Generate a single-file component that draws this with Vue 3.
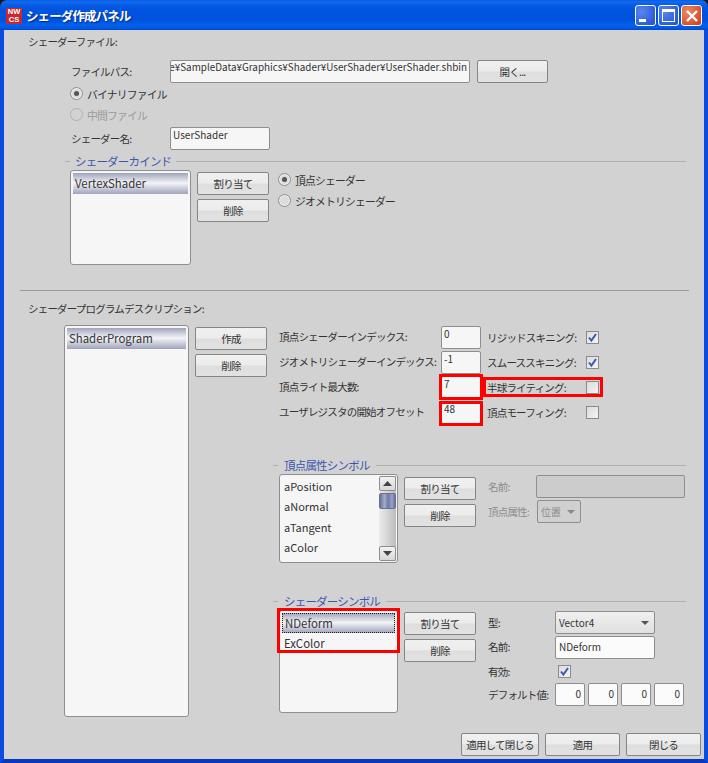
<script setup>
const fieldRows = [
  { label: '頂点シェーダーインデックス:', value: '0', flag: 'リジッドスキニング:', checked: true },
  { label: 'ジオメトリシェーダーインデックス:', value: '-1', flag: 'スムーススキニング:', checked: true },
  { label: '頂点ライト最大数:', value: '7', flag: '半球ライティング:', checked: false, mark: 'mark-a', markFlag: true },
  { label: 'ユーザレジスタの開始オフセット', value: '48', flag: '頂点モーフィング:', checked: false, mark: 'mark-b' }
]
const attributes = ['aPosition', 'aNormal', 'aTangent', 'aColor']
const defaults = ['0', '0', '0', '0']
</script>

<template>
  <div class="window">
    <header class="titlebar">
      <div class="app-icon"><span>NW</span><span>CS</span></div>
      <div class="caption">シェーダ作成パネル</div>
      <div class="caption-btn minimize"><i></i></div>
      <div class="caption-btn maximize"><i></i></div>
      <div class="caption-btn close">
        <svg width="14" height="14" viewBox="0 0 14 14"><path d="M2 2 L12 12 M12 2 L2 12" stroke="#fff" stroke-width="2.4" fill="none" /></svg>
      </div>
    </header>

    <main class="client">
      <div class="title first">シェーダーファイル:</div>

      <section class="file-form">
        <div class="row">
          <label class="lbl w99">ファイルパス:</label>
          <div class="input path"><span>e¥SampleData¥Graphics¥Shader¥UserShader¥UserShader.shbin</span></div>
          <button class="btn open">開く...</button>
        </div>
        <div class="radio-row outset"><span class="radio on"></span><span>バイナリファイル</span></div>
        <div class="radio-row outset disabled"><span class="radio"></span><span>中間ファイル</span></div>
        <div class="row">
          <label class="lbl w99">シェーダー名:</label>
          <div class="input name"><span>UserShader</span></div>
        </div>
      </section>

      <section class="group kind">
        <div class="group-head"><span class="dash"></span><span class="group-title">シェーダーカインド</span><span class="rule"></span></div>
        <div class="group-body">
          <div class="list kind-list"><div class="item selected">VertexShader</div></div>
          <div class="btn-col">
            <button class="btn">割り当て</button>
            <button class="btn">削除</button>
          </div>
          <div class="radio-col">
            <div class="radio-row"><span class="radio on"></span><span>頂点シェーダー</span></div>
            <div class="radio-row"><span class="radio"></span><span>ジオメトリシェーダー</span></div>
          </div>
        </div>
      </section>

      <hr class="separator" />
      <div class="title">シェーダープログラムデスクリプション:</div>

      <section class="program">
        <div class="list program-list"><div class="item selected">ShaderProgram</div></div>
        <div class="btn-col">
          <button class="btn">作成</button>
          <button class="btn">削除</button>
        </div>

        <div class="detail">
          <div class="fields">
            <template v-for="row in fieldRows" :key="row.label">
              <div class="lbl">{{ row.label }}</div>
              <div class="input small" :class="row.mark"><span>{{ row.value }}</span></div>
              <div class="flag" :class="{ 'mark-flag': row.markFlag }">
                <span class="lbl">{{ row.flag }}</span>
                <span class="check">
                  <svg v-if="row.checked" width="11" height="11" viewBox="0 0 11 11"><path d="M2 5.5 L4.4 8.5 L9 2" stroke="#3a58b8" stroke-width="2" fill="none" /></svg>
                </span>
              </div>
            </template>
          </div>

          <section class="group sub attr">
            <div class="group-head"><span class="dash"></span><span class="group-title">頂点属性シンボル</span><span class="rule"></span></div>
            <div class="group-body">
              <div class="list attr-list">
                <div class="attr-items">
                  <div v-for="a in attributes" :key="a" class="attr-item">{{ a }}</div>
                </div>
                <div class="scrollbar">
                  <div class="sb-btn"><svg width="9" height="5" viewBox="0 0 9 5"><path d="M0 5 L4.5 0 L9 5 Z" fill="#444" /></svg></div>
                  <div class="sb-thumb"></div>
                  <div class="sb-btn"><svg width="9" height="5" viewBox="0 0 9 5"><path d="M0 0 L9 0 L4.5 5 Z" fill="#444" /></svg></div>
                </div>
              </div>
              <div class="btn-col attr-btns">
                <button class="btn">割り当て</button>
                <button class="btn">削除</button>
              </div>
              <div class="attr-form">
                <div class="lbl muted">名前:</div>
                <div class="input off-input"></div>
                <div class="lbl muted">頂点属性:</div>
                <div class="combo off"><span>位置</span><i class="arrow"></i></div>
              </div>
            </div>
          </section>

          <section class="group sub symbol">
            <div class="group-head"><span class="dash"></span><span class="group-title">シェーダーシンボル</span><span class="rule"></span></div>
            <div class="group-body">
              <div class="list symbol-list">
                <div class="item selected focus">NDeform</div>
                <div class="item">ExColor</div>
                <div class="symbol-mark"></div>
              </div>
              <div class="btn-col">
                <button class="btn">割り当て</button>
                <button class="btn">削除</button>
              </div>
              <div class="symbol-form">
                <div class="lbl">型:</div>
                <div class="combo wide"><span>Vector4</span><i class="arrow"></i></div>
                <div class="lbl">名前:</div>
                <div class="input white"><span>NDeform</span></div>
                <div class="lbl">有効:</div>
                <div class="enable-cell">
                  <span class="check"><svg width="11" height="11" viewBox="0 0 11 11"><path d="M2 5.5 L4.4 8.5 L9 2" stroke="#3a58b8" stroke-width="2" fill="none" /></svg></span>
                </div>
                <div class="lbl">デフォルト値:</div>
                <div class="defaults">
                  <div v-for="(d, i) in defaults" :key="i" class="input num white"><span>{{ d }}</span></div>
                </div>
              </div>
            </div>
          </section>

          <footer class="footer">
            <button class="btn apply-close">適用して閉じる</button>
            <button class="btn footer-btn">適用</button>
            <button class="btn footer-btn">閉じる</button>
          </footer>
        </div>
      </section>
    </main>
  </div>
</template>

<style>
html, body { margin: 0; background: #1a1a1a; }
</style>

<style scoped>
* { box-sizing: border-box; }
.window {
  width: 708px;
  height: 763px;
  display: flex;
  flex-direction: column;
  font: 10.5px/16px "Noto Sans CJK JP", "Noto Sans", sans-serif;
  letter-spacing: -0.8px;
  color: #333;
  border-radius: 7px 7px 0 0;
  overflow: hidden;
}
.titlebar {
  height: 30px;
  flex: none;
  display: flex;
  align-items: center;
  padding: 1px 6px 0;
  background: linear-gradient(#0a5be0 0, #0f6cf0 2px, #0a5ee6 4px, #0054e0 9px, #0052dc 20px, #0062ee 25px, #0058e4 28px, #0046c8 30px);
}
.app-icon {
  width: 16px;
  height: 16px;
  background: #c8272f;
  color: #fff;
  font: bold 7.5px/8px "Liberation Sans", sans-serif;
  letter-spacing: 0;
  display: flex;
  flex-direction: column;
  align-items: center;
  justify-content: center;
  overflow: hidden;
}
.caption {
  flex: 1;
  margin-left: 4px;
  color: #fff;
  font-weight: 700;
  font-size: 12.5px;
  letter-spacing: -0.9px;
  text-shadow: 1px 1px 1px #0a2a80;
}
.caption-btn {
  width: 21px;
  height: 21px;
  margin-left: 2px;
  border: 1px solid #fff;
  border-radius: 3px;
  background: radial-gradient(circle at 30% 30%, #5a86f0, #2f5ed8 70%, #2a50c0);
  display: flex;
  align-items: center;
  justify-content: center;
}
.caption-btn.close { background: radial-gradient(circle at 30% 30%, #e88a68, #d8532f 70%, #c04020); }
.minimize i { width: 7px; height: 3px; background: #fff; margin: 9px 6px 0 0; }
.maximize i { width: 13px; height: 13px; border: 1px solid #fff; border-top-width: 3px; }

.client {
  flex: 1;
  background: #d2d2d2;
  border-left: 4px solid #0a4be0;
  border-right: 4px solid #0a4be0;
  border-bottom: 4px solid #0838c0;
}

.title { height: 18px; line-height: 18px; margin: 9px 0 0 24px; }
.title.first { margin-top: 3px; }
.lbl { line-height: 23px; white-space: nowrap; }
.w99 { width: 99px; flex: none; }
.muted { color: #8c8c8c; }

.file-form { margin: 9px 0 0 67px; }
.row { display: flex; align-items: center; height: 23px; }
.radio-row { display: flex; align-items: center; height: 21px; gap: 4px; white-space: nowrap; font-size: 10.8px; }
.outset { margin-left: -1px; }
.disabled { color: #9a9a9a; margin-bottom: 2px; }
.radio {
  width: 13px;
  height: 13px;
  flex: none;
  border-radius: 50%;
  border: 1px solid #8f8f8f;
  background: #dcdcdc;
  box-shadow: inset 0 0 0 1px #efefef;
  display: flex;
  align-items: center;
  justify-content: center;
}
.radio.on::after { content: ""; width: 5px; height: 5px; border-radius: 50%; background: #555; }
.disabled .radio { border-color: #b0b0b0; background: #d2d2d2; box-shadow: none; }

.input {
  height: 23px;
  border: 1px solid #8e8e8e;
  border-radius: 2px;
  background: #f6f6f6;
  padding: 0 2px;
  font-size: 10px;
  letter-spacing: 0;
  line-height: 13px;
  overflow: hidden;
  white-space: nowrap;
  flex: none;
}
.path { width: 300px; display: flex; justify-content: flex-end; font-size: 9.9px; }
.name { width: 100px; }
.small { width: 40px; position: relative; overflow: visible; }
.white { background: #fbfbfb; }
.btn {
  width: 72px;
  height: 23px;
  padding: 0;
  font: inherit;
  letter-spacing: inherit;
  color: #333;
  border: 1px solid #858585;
  border-radius: 2px;
  background: linear-gradient(#f0f0f0 0, #ececec 48%, #dedede 52%, #e2e2e2 100%);
  line-height: 20px;
  white-space: nowrap;
}
.open { width: 71px; margin-left: 7px; }

.group-head { display: flex; align-items: center; height: 18px; }
.dash { width: 5px; height: 1px; background: #b0b0b0; flex: none; }
.group-title { color: #3d55b0; margin: 0 5px; white-space: nowrap; font-size: 11.5px; }
.rule { flex: 1; height: 1px; background: #b0b0b0; }
.group-body { display: flex; align-items: flex-start; }

.kind { margin: 2px 18px 0 61px; }
.kind .group-body { padding-left: 5px; }

.list {
  flex: none;
  border: 1px solid #8e8e8e;
  border-radius: 3px;
  background: #f6f6f6;
  padding: 2px;
  position: relative;
}
.kind-list { width: 121px; height: 95px; }
.program-list { width: 125px; height: 392px; }
.item { height: 21px; line-height: 20px; padding-left: 2px; white-space: nowrap; font-size: 11.4px; letter-spacing: 0; }
.selected { background: linear-gradient(#9ea4bc 0, #c6c9d6 22%, #f3f4f7 48%, #c8cbd8 74%, #9ea4bc 100%); }
.focus { outline: 1px dotted #222; outline-offset: -1px; }

.btn-col { display: flex; flex-direction: column; gap: 4px; margin-left: 6px; padding-top: 2px; flex: none; }
.attr-btns { padding-top: 3px; }
.radio-col { margin: -1px 0 0 9px; }

.separator { border: 0; height: 1px; background: #9a9a9a; margin: 25px 15px 0 16px; }

.program { display: flex; align-items: flex-start; margin: 7px 0 0 60px; }
.detail { margin-left: 12px; width: 422px; padding-top: 1px; }

.fields {
  display: grid;
  grid-template-columns: 162px 40px auto;
  grid-auto-rows: 23px;
  row-gap: 2px;
  justify-content: start;
}
.fields .lbl { line-height: 21px; }
.flag { display: flex; align-items: center; width: 112px; margin-left: 6px; height: 23px; position: relative; }
.flag .lbl { width: 99px; flex: none; }
.check {
  width: 13px;
  height: 13px;
  flex: none;
  border: 1px solid #8a8a8a;
  background: linear-gradient(135deg, #dcdcdc, #f4f4f4);
  display: flex;
  align-items: center;
  justify-content: center;
}
.mark-a::after, .mark-b::after, .mark-flag::after {
  content: "";
  position: absolute;
  border: 3px solid #f00;
  pointer-events: none;
}
.mark-a::after { left: -3px; right: -3px; top: -3px; bottom: -2px; }
.mark-b::after { left: -3px; right: -3px; top: -1px; bottom: -3px; }
.mark-flag::after { left: -4px; right: -4px; top: 1px; bottom: 2px; }

.sub { margin-left: -6px; width: 413px; }
.sub .group-body { padding-left: 6px; }
.sub .group-title { margin: 0 6px; }
.attr { margin-top: 32px; }
.symbol { margin-top: 29px; }

.attr-list { width: 119px; height: 89px; padding: 1px 1px 1px 4px; display: flex; }
.attr-item { height: 20.4px; line-height: 20.4px; font-size: 11px; letter-spacing: 0; }
.attr-items { flex: 1; }
.scrollbar { width: 17px; display: flex; flex-direction: column; background: linear-gradient(90deg, #ececec, #bcbcbc); }
.sb-btn { height: 15px; flex: none; border: 1px solid #8e8e8e; border-radius: 2px; background: linear-gradient(#f2f2f2, #d8d8d8); display: flex; align-items: center; justify-content: center; }
.sb-thumb { height: 16px; margin: 2px 0 auto; border: 1px solid #6a7090; border-radius: 2px; background: linear-gradient(90deg, #66709c, #a3abcc 30%, #6f7aa6 55%, #9aa3c6 80%, #66709c); }

.attr-form { margin-left: 12px; padding-top: 1px; display: grid; grid-template-columns: 48px 149px; grid-auto-rows: 23px; row-gap: 2px; }
.off-input { width: 149px; background: #cccccc; }
.combo {
  height: 23px;
  border: 1px solid #8e8e8e;
  border-radius: 2px;
  display: flex;
  align-items: center;
  justify-content: space-between;
  padding: 0 5px 0 3px;
  font-size: 10px;
  letter-spacing: 0;
  background: linear-gradient(#f0f0f0, #e0e0e0);
}
.combo.off { width: 44px; margin-left: 1px; color: #8c8c8c; background: #d0d0d0; }
.combo.wide { width: 100px; }
.arrow { width: 0; height: 0; border: 4px solid transparent; border-top: 4px solid #555; border-bottom: 0; }
.off .arrow { border-top-color: #888; }

.symbol-list { width: 119px; height: 103px; }
.symbol-list .item { height: 20px; line-height: 20px; }
.symbol-list .selected { padding-left: 3px; }
.symbol-mark { position: absolute; left: -3px; top: -3px; width: 123px; height: 45px; border: 3px solid #f00; pointer-events: none; }

.symbol-form { margin-left: 12px; display: grid; grid-template-columns: 67px auto; align-items: center; padding-top: 1px; }
.symbol-form .lbl { height: 23px; }
.symbol-form .input.white { width: 100px; margin-top: 2px; line-height: 20px; padding-left: 3px; }
.enable-cell { height: 24px; padding-left: 3px; display: flex; align-items: center; }
.defaults { display: flex; gap: 3px; }
.symbol-form .defaults .input.num { width: 30px; margin-top: 0; text-align: right; padding-right: 3px; }

.footer { display: flex; justify-content: flex-end; gap: 6px; margin-top: 20px; }
.apply-close { width: 78px; }
.footer-btn { width: 75px; }
</style>
